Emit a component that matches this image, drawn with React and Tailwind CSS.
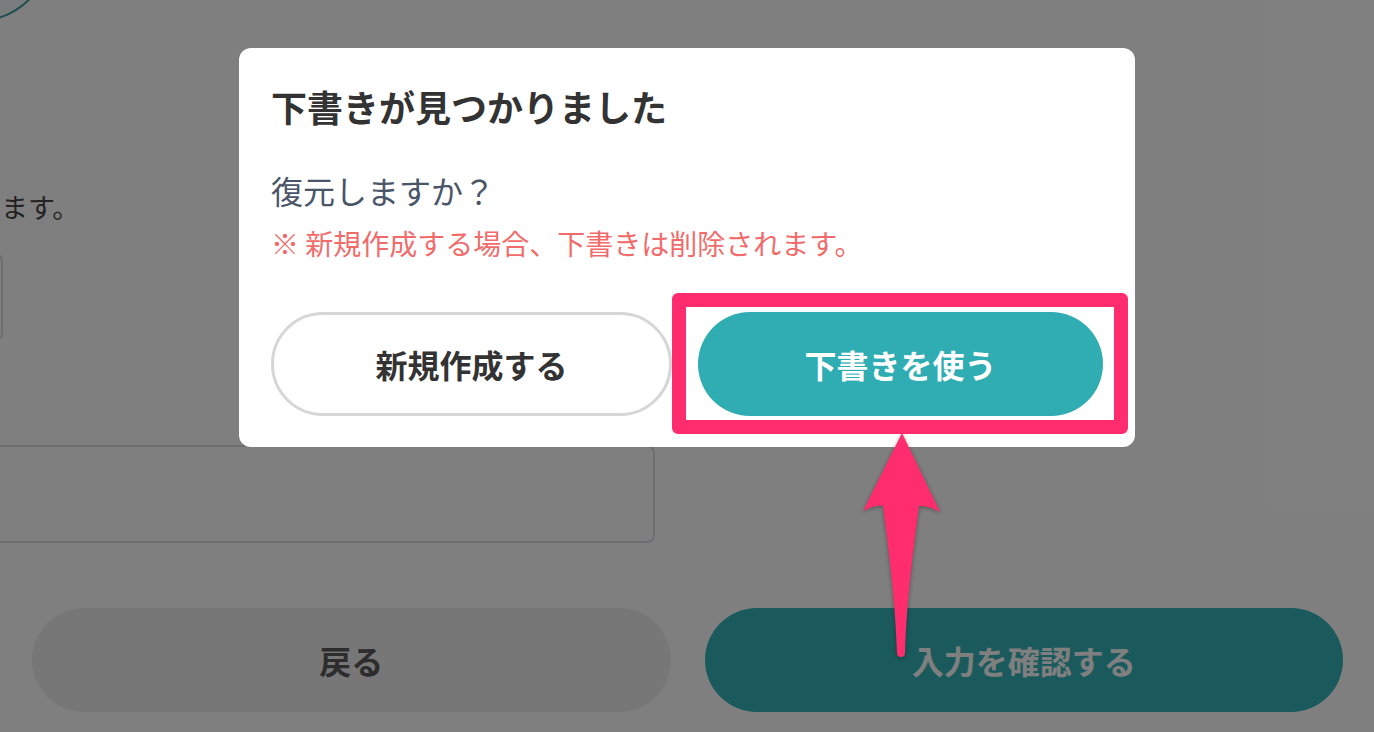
import React from "react";

const font = {
  fontFamily: '"Noto Sans CJK JP", "Noto Sans", sans-serif',
};

function Arrow() {
  return (
    <svg
      className="pointer-events-none absolute left-[850px] top-[425px] h-[240px] w-[110px] drop-shadow-[0_1px_2px_rgba(0,0,0,0.35)]"
      viewBox="0 0 110 240"
    >
      <path
        d="M52 8 L90 87 Q78 80 69 81 C64 120 57 170 55 228 A4 4 0 0 1 47 228 C45 170 38 120 33 81 Q24 80 13 86 Z"
        fill="#ff2d6e"
      />
    </svg>
  );
}

export default function App() {
  return (
    <div
      className="relative h-[732px] w-[1374px] overflow-hidden bg-white"
      style={font}
    >
      {/* Page behind the dialog */}
      <div className="flex flex-col">
        <div className="-ml-[98px] -mt-[128px] h-[150px] w-[150px] rounded-full border-2 border-[#3a9a9c] bg-[#f4fbfb]" />

        <div className="mt-[166px] whitespace-nowrap pl-[1px] text-[27px] leading-[38px] text-[#464646]">
          ます。
        </div>

        <div className="-ml-[297px] mt-[27px] h-[88px] w-[300px] rounded-lg border-2 border-[#dcdce4] bg-white" />

        <div className="-ml-[45px] mt-[104px] h-[98px] w-[700px] rounded-lg border-2 border-[#dcdce4] bg-white" />

        <div className="mt-[65px] flex gap-[34px] pl-8 pr-[31px]">
          <button className="h-[104px] flex-1 rounded-full bg-[#eeeeee] text-[32px] font-bold text-[#5a5a5a]">
            戻る
          </button>
          <button className="h-[104px] flex-1 rounded-full bg-[#36b4b8] text-[32px] font-bold text-white">
            入力を確認する
          </button>
        </div>
      </div>

      {/* Overlay */}
      <div className="absolute inset-0 bg-black/50" />

      {/* Dialog */}
      <div className="absolute inset-0 flex items-start justify-center pt-12">
        <div className="w-[896px] rounded-xl bg-white px-8 pb-[31px] pt-8">
          <h2 className="text-[36px] font-bold leading-[52px] text-[#333333]">
            下書きが見つかりました
          </h2>
          <p className="mt-[34px] text-[32px] leading-[48px] text-[#4a5568]">
            復元しますか？
          </p>
          <p className="mt-2 text-[28px] leading-[42px] text-[#f26b6b]">
            ※ 新規作成する場合、下書きは削除されます。
          </p>
          <div className="mt-12 flex gap-[26px]">
            <button className="h-[104px] w-[401px] rounded-full border-[3px] border-[#d6d6d6] bg-white text-[32px] font-bold text-[#333333]">
              新規作成する
            </button>
            <div className="relative flex-1">
              <button className="h-[104px] w-full rounded-full bg-[#2fadb3] text-[32px] font-bold text-white">
                下書きを使う
              </button>
              <div className="pointer-events-none absolute -bottom-[18px] -left-[26px] -right-[25px] -top-[19px] rounded-md border-[14px] border-[#ff2d6e]" />
            </div>
          </div>
        </div>
      </div>

      <Arrow />
    </div>
  );
}
